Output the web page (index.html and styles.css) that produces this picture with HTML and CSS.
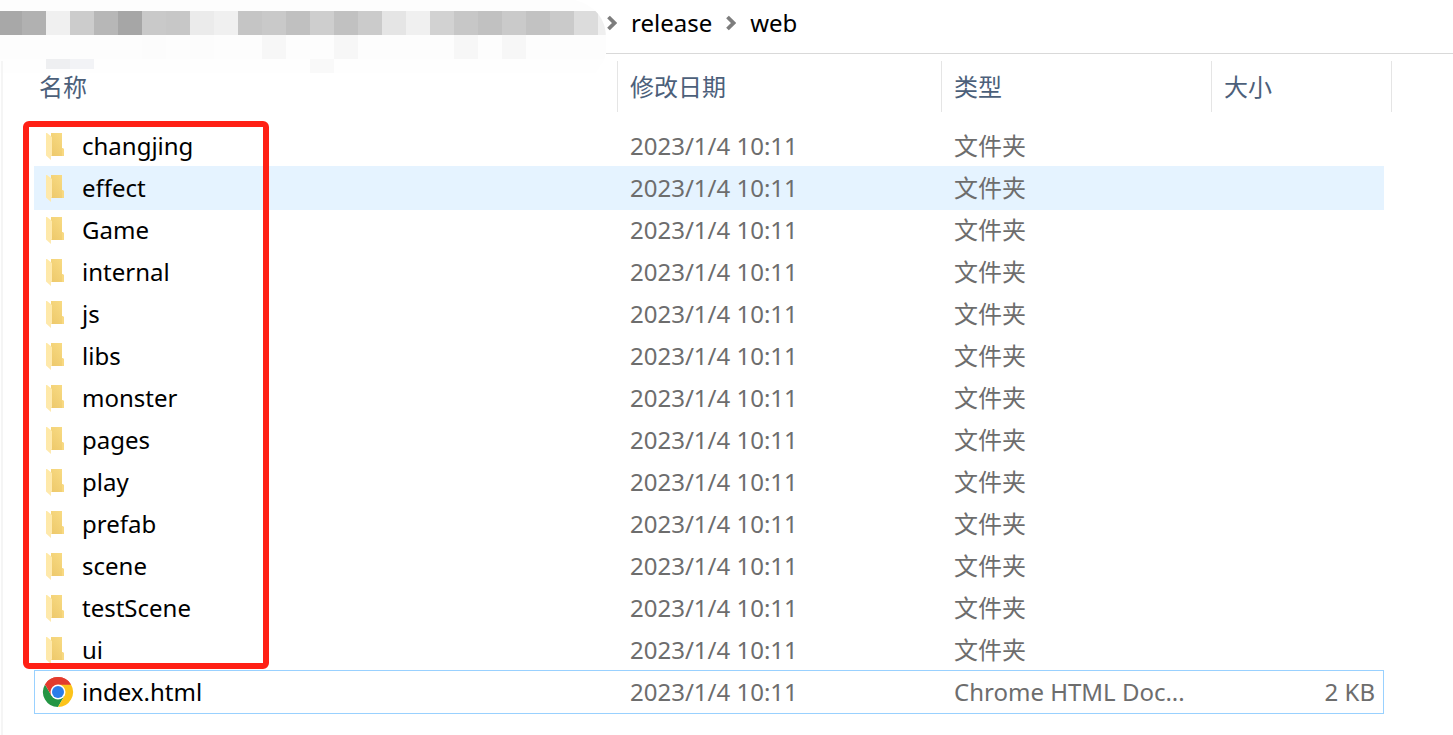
FILE: index.html
```html
<!DOCTYPE html>
<html lang="zh-CN">
<head>
	<meta charset="UTF-8">
	<title>web</title>
	<link rel="stylesheet" href="styles.css">
	<script src="files.js" defer></script>
</head>
<body>

	<!-- 图标 -->
	<svg class="defs" width="0" height="0">
		<defs>
			<linearGradient id="flap" x1="0" y1="0" x2="1" y2="1">
				<stop offset="0" stop-color="#ffe9a6"/>
				<stop offset="1" stop-color="#fee9b0"/>
			</linearGradient>
			<linearGradient id="back" x1="0" y1="1" x2="1" y2="0">
				<stop offset="0" stop-color="#ebc566"/>
				<stop offset="1" stop-color="#f9dc85"/>
			</linearGradient>
			<symbol id="folder" viewBox="0 0 32 32">
				<path d="M4 3h16v15l2 1v7H9V3z" fill="url(#back)"/>
				<path d="M20 18l2 1v7h-2z" fill="#f8d982"/>
				<path d="M4 3h1l5 4v18.500l-1 .5v4L4 25.500z" fill="url(#flap)"/>
			</symbol>
			<symbol id="chrome" viewBox="0 0 32 32">
				<path d="M16 16L3 8.500A15 15 0 0 1 29 8.500z" fill="#e33b2e"/>
				<path d="M3 8.500A15 15 0 0 0 16 31l6.500-11.250H9.500z" fill="#249544"/>
				<path d="M29 8.500A15 15 0 0 1 16 31l6.500-11.250L16 8.500z" fill="#fcc31a"/>
				<path d="M3 8.500L9.500 19.750 16 16V8.500h13A15 15 0 0 0 3 8.500z" fill="#e33b2e"/>
				<circle cx="16" cy="16" r="7.500" fill="#fff"/>
				<circle cx="16" cy="16" r="6" fill="#2a7de9"/>
			</symbol>
			<symbol id="arrow" viewBox="0 0 10 16">
				<path d="M1.500 2l6 6-6 6" fill="none" stroke="#7d7d7d" stroke-width="3.800"/>
			</symbol>
		</defs>
	</svg>

	<!-- 地址栏 -->
	<nav class="path">
		<svg class="mosaic" width="606" height="73" viewBox="0 0 606 73" shape-rendering="crispEdges">
			<clipPath id="round"><path d="M0 0h575q31 9 31 38v10q0 12-6 18l-4 7H0z"/></clipPath>
			<g clip-path="url(#round)">
				<rect width="606" height="73" fill="#fefefe"/>
				<rect width="606" height="59" fill="#fdfdfd"/>
				<rect x="0" y="11" width="22" height="24" fill="#a8a8a8"/>
				<rect x="22" y="11" width="24" height="24" fill="#b1b1b1"/>
				<rect x="46" y="11" width="24" height="24" fill="#f0f0f0"/>
				<rect x="70" y="11" width="24" height="24" fill="#cccccc"/>
				<rect x="94" y="11" width="24" height="24" fill="#b7b7b7"/>
				<rect x="118" y="11" width="24" height="24" fill="#a6a6a6"/>
				<rect x="142" y="11" width="24" height="24" fill="#c9c9c9"/>
				<rect x="166" y="11" width="24" height="24" fill="#c7c7c7"/>
				<rect x="190" y="11" width="24" height="24" fill="#ebebeb"/>
				<rect x="214" y="11" width="24" height="24" fill="#f0f0f0"/>
				<rect x="238" y="11" width="24" height="24" fill="#c5c5c5"/>
				<rect x="262" y="11" width="24" height="24" fill="#c9c9c9"/>
				<rect x="286" y="11" width="24" height="24" fill="#c0c0c0"/>
				<rect x="310" y="11" width="24" height="24" fill="#cecece"/>
				<rect x="334" y="11" width="24" height="24" fill="#c1c1c1"/>
				<rect x="358" y="11" width="24" height="24" fill="#cbcbcb"/>
				<rect x="382" y="11" width="24" height="24" fill="#e5e5e5"/>
				<rect x="406" y="11" width="24" height="24" fill="#f0f0f0"/>
				<rect x="430" y="11" width="24" height="24" fill="#d2d2d2"/>
				<rect x="454" y="11" width="24" height="24" fill="#c7c7c7"/>
				<rect x="478" y="11" width="24" height="24" fill="#c1c1c1"/>
				<rect x="502" y="11" width="24" height="24" fill="#cacaca"/>
				<rect x="526" y="11" width="24" height="24" fill="#c2c2c2"/>
				<rect x="550" y="11" width="24" height="24" fill="#cacaca"/>
				<rect x="574" y="11" width="24" height="24" fill="#dcdcdc"/>
				<rect x="598" y="11" width="8" height="24" fill="#efefef"/>
				<rect x="142" y="35" width="24" height="24" fill="#fcfcfc"/>
				<rect x="190" y="35" width="24" height="24" fill="#fcfcfc"/>
				<rect x="262" y="35" width="24" height="24" fill="#f7f7f7"/>
				<rect x="334" y="35" width="24" height="24" fill="#f7f7f7"/>
				<rect x="454" y="35" width="24" height="24" fill="#f7f7f7"/>
				<rect x="502" y="35" width="24" height="24" fill="#f7f7f7"/>
				<rect x="310" y="59" width="24" height="14" fill="#f9f9f9"/>
				<rect x="46" y="59" width="24" height="10" fill="#eeeff1"/>
				<rect x="70" y="59" width="24" height="10" fill="#f2f3f6"/>
			</g>
		</svg>
		<svg class="arrow"><use href="#arrow"/></svg>
		<a href="#release">release</a>
		<svg class="arrow"><use href="#arrow"/></svg>
		<a href="#web">web</a>
	</nav>

	<!-- 文件列表 -->
	<main class="files">
		<table class="list">
			<thead>
				<tr>
					<th>名称</th>
					<th>修改日期</th>
					<th>类型</th>
					<th>大小</th>
				</tr>
			</thead>
			<tbody id="rows"></tbody>
		</table>
		<div class="mark"></div>
	</main>

</body>
</html>
```
FILE: files.js
```js
var folders = ['changjing', 'effect', 'Game', 'internal', 'js', 'libs', 'monster',
	'pages', 'play', 'prefab', 'scene', 'testScene', 'ui'];
var rows = document.getElementById('rows');

function addRow(name, icon, type, size, cls) {
	rows.innerHTML += '<tr class="' + cls + '">' +
		'<td class="name"><svg class="icon"><use href="#' + icon + '"/></svg>' + name + '</td>' +
		'<td>2023/1/4 10:11</td>' +
		'<td>' + type + '</td>' +
		'<td class="size">' + size + '</td></tr>';
}

for (var i = 0; i < folders.length; i++) {
	addRow(folders[i], 'folder', '文件夹', '', folders[i] == 'effect' ? 'hover' : '');
}
addRow('index.html', 'chrome', 'Chrome HTML Doc...', '2 KB', 'focus');
```
FILE: styles.css
```css
*{margin: 0;padding: 0;box-sizing: border-box;}
body{
	background: #fff;
	color: #000;
	font: 24px/42px "Noto Sans", "Noto Sans CJK SC", sans-serif;
}
.defs{
	position: absolute;
}

/*地址栏*/
.path{
	position: relative;
	display: flex;
	align-items: center;
	gap: 14px;
	height: 54px;
	padding: 0 0 7px 607px;
	border-bottom: 1px solid #d9d9d9;
}
.path a{
	color: #000;
	text-decoration: none;
}
.arrow{
	width: 10px;
	height: 16px;
}
.mosaic{
	position: absolute;
	top: 0;
	left: 0;
	background: #fff;
}

/*文件列表*/
.files{
	position: relative;
	margin: 7px 0 0 1px;
	padding: 0 61px 22px 32px;
	border-left: 2px solid #f5f5f5;
}
.list, .list tbody{
	display: block;
}
.list tbody{
	margin-right: 9px;
}
.list thead{
	display: block;
	margin-bottom: 13px;
}
.list tr{
	display: grid;
	grid-template-columns: 1fr 324px 270px 171px;
}
.list thead tr{
	grid-template-columns: 1fr 324px 270px 180px;
}
.list th{
	height: 51px;
	padding: 5px 12px;
	border-right: 1px solid #e5e5e5;
	color: #4c607a;
	font-weight: normal;
	text-align: left;
}
.list th:first-child{
	padding-left: 4px;
}
.list td{
	height: 42px;
	padding: 0 12px;
	color: #6d6d6d;
	white-space: nowrap;
}
.list .name{
	display: flex;
	align-items: center;
	gap: 8px;
	padding-left: 7px;
	color: #000;
}
.list .size{
	padding-right: 8px;
	text-align: right;
}
.icon{
	width: 32px;
	height: 32px;
}
.hover{
	background: #e5f3ff;
	outline: 1px solid #e5f3ff;
}
.focus{
	outline: 1px solid #99d1ff;
}

/*红框*/
.mark{
	position: absolute;
	top: 60px;
	left: 20px;
	width: 246px;
	height: 548px;
	border: 6px solid #ff2015;
	border-radius: 6px;
}
```
